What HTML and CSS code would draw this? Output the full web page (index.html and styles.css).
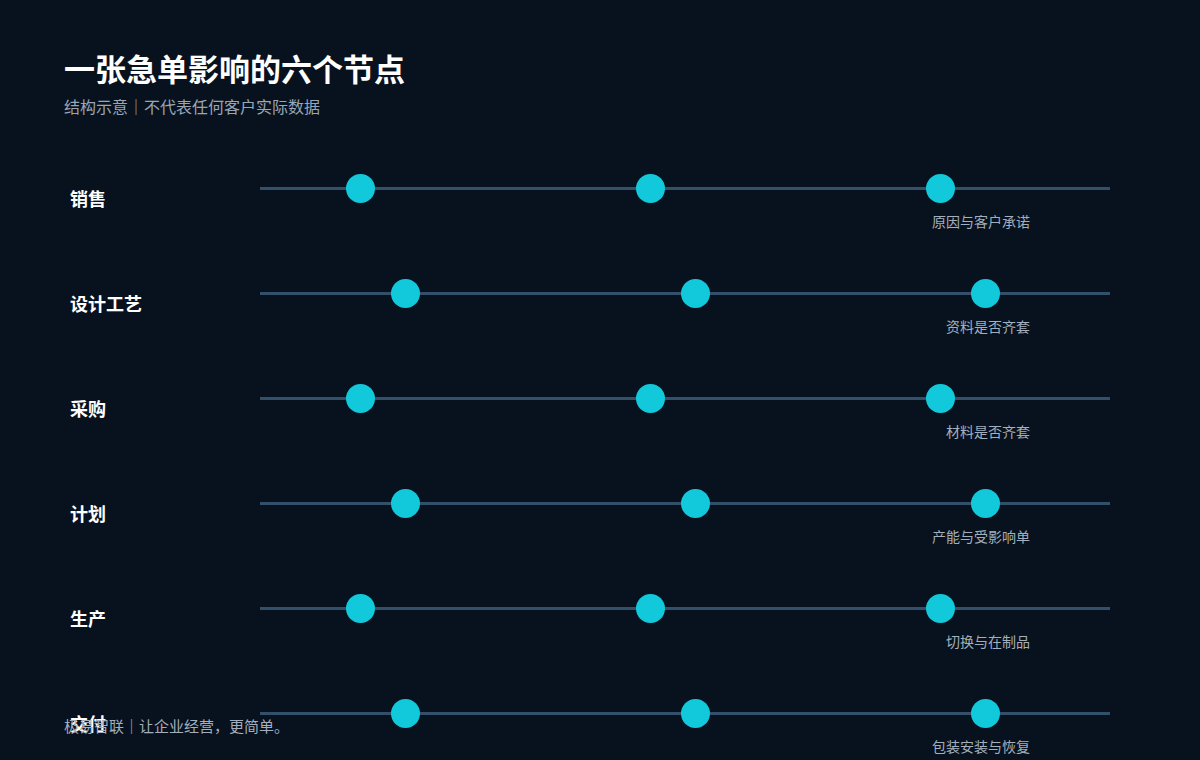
FILE: index.html
```html
<!DOCTYPE html>
<html lang="zh-CN">
<head>
<meta charset="utf-8">
<title>一张急单影响的六个节点</title>
<link rel="stylesheet" href="styles.css">
</head>
<body>
<main class="page">
  <header class="head">
    <h1 class="title">一张急单影响的六个节点</h1>
    <p class="subtitle">结构示意｜不代表任何客户实际数据</p>
  </header>
  <section class="rows">
    <div class="row">
      <div class="label">销售</div>
      <div class="track">
        <div class="line">
          <span class="dot" style="left:100px"></span>
          <span class="dot" style="left:390px"></span>
          <span class="dot" style="left:680px"></span>
        </div>
        <div class="caption">原因与客户承诺</div>
      </div>
    </div>
    <div class="row">
      <div class="label">设计工艺</div>
      <div class="track">
        <div class="line">
          <span class="dot" style="left:145px"></span>
          <span class="dot" style="left:435px"></span>
          <span class="dot" style="left:725px"></span>
        </div>
        <div class="caption">资料是否齐套</div>
      </div>
    </div>
    <div class="row">
      <div class="label">采购</div>
      <div class="track">
        <div class="line">
          <span class="dot" style="left:100px"></span>
          <span class="dot" style="left:390px"></span>
          <span class="dot" style="left:680px"></span>
        </div>
        <div class="caption">材料是否齐套</div>
      </div>
    </div>
    <div class="row">
      <div class="label">计划</div>
      <div class="track">
        <div class="line">
          <span class="dot" style="left:145px"></span>
          <span class="dot" style="left:435px"></span>
          <span class="dot" style="left:725px"></span>
        </div>
        <div class="caption">产能与受影响单</div>
      </div>
    </div>
    <div class="row">
      <div class="label">生产</div>
      <div class="track">
        <div class="line">
          <span class="dot" style="left:100px"></span>
          <span class="dot" style="left:390px"></span>
          <span class="dot" style="left:680px"></span>
        </div>
        <div class="caption">切换与在制品</div>
      </div>
    </div>
    <div class="row">
      <div class="label">交付</div>
      <div class="track">
        <div class="line">
          <span class="dot" style="left:145px"></span>
          <span class="dot" style="left:435px"></span>
          <span class="dot" style="left:725px"></span>
        </div>
        <div class="caption">包装安装与恢复</div>
      </div>
    </div>
  </section>
  <footer class="footer">极易智联｜让企业经营，更简单。</footer>
</main>
</body>
</html>
```
FILE: styles.css
```css
html, body {
  margin: 0;
  padding: 0;
  background: #08121e;
  height: 100%;
  overflow: hidden;
}
body {
  font-family: "Noto Sans CJK SC", "Noto Sans", "Liberation Sans", sans-serif;
  color: #ffffff;
}
.page {
  position: relative;
  width: 1200px;
  height: 760px;
  box-sizing: border-box;
  padding: 48px 0 0 64px;
  overflow: hidden;
}
.title {
  margin: 0;
  font-size: 31px;
  line-height: 40px;
  font-weight: 700;
  color: #ffffff;
}
.subtitle {
  margin: 6px 0 0;
  font-size: 16px;
  line-height: 24px;
  color: #98a6b6;
}
.rows {
  margin-top: 40px;
}
.row {
  display: grid;
  grid-template-columns: 196px 850px;
  height: 105px;
}
.label {
  padding: 28px 0 0 6px;
  font-size: 18px;
  line-height: 24px;
  font-weight: 700;
  color: #ffffff;
}
.track {
  padding-top: 29px;
}
.line {
  position: relative;
  height: 3px;
  background: #33506a;
}
.dot {
  position: absolute;
  top: -13px;
  width: 29px;
  height: 29px;
  margin-left: -14.5px;
  border-radius: 50%;
  background: #12c9dc;
}
.caption {
  margin-top: 21px;
  padding-right: 80px;
  text-align: right;
  font-size: 14px;
  line-height: 20px;
  color: #a3afbd;
}
.footer {
  position: absolute;
  left: 64px;
  bottom: 23px;
  font-size: 15px;
  line-height: 22px;
  color: #a3afbd;
}
```
